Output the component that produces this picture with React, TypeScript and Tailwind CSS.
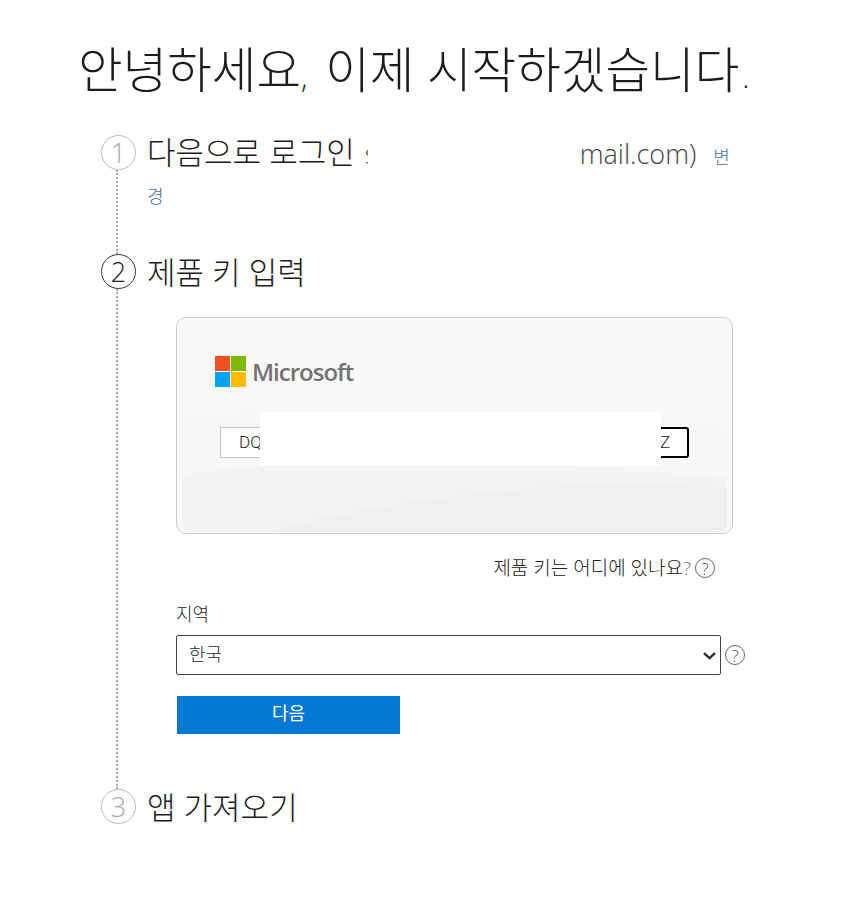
import React from "react";

const font = "font-['Open_Sans','Noto_Sans_CJK_KR',sans-serif]";

function Circle({ n, active }: { n: number; active?: boolean }) {
  return (
    <div
      className={
        "w-[35px] h-[35px] shrink-0 rounded-full border flex items-center justify-center text-[27px] font-light leading-none " +
        (active ? "border-[#333] text-[#222]" : "border-[#bbb] text-[#aaa]")
      }
    >
      {n}
    </div>
  );
}

function Line() {
  return <div className="flex-1 w-0 mr-[3px] border-l-2 border-dotted border-[#aaa]" />;
}

function Help() {
  return (
    <span className="w-5 h-5 shrink-0 rounded-full border border-[#666] flex items-center justify-center text-[17px] font-light leading-none text-[#555]">
      ?
    </span>
  );
}

function Logo() {
  return (
    <svg width="31" height="31" viewBox="0 0 31 31" className="shrink-0">
      <rect x="0" y="0" width="15" height="15" fill="#f25022" />
      <rect x="16" y="0" width="15" height="15" fill="#7fba00" />
      <rect x="0" y="16" width="15" height="15" fill="#00a4ef" />
      <rect x="16" y="16" width="15" height="15" fill="#ffb900" />
    </svg>
  );
}

export default function App() {
  return (
    <div className={"w-[847px] h-[913px] bg-white text-[#1c1c1c] overflow-hidden " + font}>
      <h1 className="pl-[78px] pt-[37px] h-[135px] text-[48.5px] leading-[64px] font-light whitespace-nowrap">
        안녕하세요<span className="text-[30px] pr-[5px]">,</span> 이제 시작하겠습니다<span className="text-[30px] pl-[3px]">.</span>
      </h1>

      <div className="pl-[101px] w-[760px]">
        {/* Step 1 */}
        <div className="flex gap-[11px] h-[119px]">
          <div className="w-[35px] flex flex-col items-center">
            <Circle n={1} />
            <Line />
          </div>
          <p className="w-[590px] text-[31px] leading-[34px] font-light break-all">
            <span>다음으로 로그인</span>
            <span className="inline-block w-[13px] pl-[3px] whitespace-nowrap [clip-path:inset(0_0_0_0)] text-[27px] font-light">
              &nbsp;s
            </span>
            <span className="inline-block w-[212px]" />
            <span className="font-light text-[27px] text-[#444]">mail.com)</span>
            <a className="ml-[17px] text-[18px] text-[#4472a8]">변경</a>
          </p>
        </div>

        {/* Step 2 */}
        <div className="flex gap-[11px] h-[535px]">
          <div className="w-[35px] flex flex-col items-center">
            <Circle n={2} active />
            <Line />
          </div>
          <div className="flex-1 min-w-0">
            <h2 className="text-[31px] leading-[36px] font-light whitespace-nowrap">제품 키 입력</h2>

            <div className="ml-[29px] w-[557px] mt-[27px]">
              <div className="relative h-[217px] rounded-[10px] border border-[#cccccc] bg-[#f8f8f8] overflow-visible">
                <svg
                  className="absolute inset-0 w-full h-full rounded-[10px]"
                  viewBox="0 0 555 215"
                  preserveAspectRatio="none"
                >
                  <path d="M5 100 C150 85 400 95 550 112 L550 205 Q550 214 540 214 L15 214 Q5 214 5 205 Z" fill="#f7f7f7" />
                  <path d="M5 157 C40 152 80 148 120 146 C300 140 450 150 550 160 L550 205 Q550 214 540 214 L15 214 Q5 214 5 205 Z" fill="#f3f3f3" />
                  <path d="M90 214 C180 190 300 172 400 168 C460 166 510 168 550 171 L550 205 Q550 214 540 214 Z" fill="#efefef" />
                </svg>

                <div className="relative pt-[38px] pl-[38px] pr-[43px]">
                  <div className="flex items-center gap-[6px] h-[31px]">
                    <Logo />
                    <span className="font-['Open_Sans',sans-serif] text-[24px] font-semibold tracking-[-1px] text-[#737373]">
                      Microsoft
                    </span>
                  </div>

                  <div className="relative mt-[40px] ml-[5px] h-[31px] flex font-['Roboto',sans-serif] font-light text-[17px] text-[#222]">
                    <div className="w-[60px] bg-white border border-[#c8c8c8] pl-[18px] leading-[29px]">DQ</div>
                    <div className="flex-1 bg-white border-y border-[#c8c8c8]" />
                    <div className="w-[48px] bg-white border-2 border-black rounded-[3px] pl-[17px] leading-[27px]">Z</div>
                    {/* redaction patch over the key */}
                    <div className="absolute left-[40px] top-[-15px] w-[401px] h-[54px] bg-white" />
                  </div>
                </div>
              </div>

              <div className="mt-[23px] h-[22px] pr-[18px] flex items-center justify-end gap-[4px] text-[19px] font-light text-[#222]">
                <span className="whitespace-nowrap">
                  제품 키는 어디에 있나요<span className="text-[#777]">?</span>
                </span>
                <Help />
              </div>

              <label className="block mt-[23px] text-[18px] leading-[24px] font-light text-[#222]">지역</label>

              <div className="mt-[9px] flex items-center gap-1">
                <div className="relative w-[545px] shrink-0">
                  <select className="block w-full h-[40px] appearance-none pl-3 pb-[2px] border border-[#444] rounded-[2px] bg-white text-[18px] font-light text-[#222]">
                    <option>한국</option>
                  </select>
                  <svg
                    className="absolute right-[5px] top-[17px] pointer-events-none"
                    width="13"
                    height="8"
                    viewBox="0 0 13 8"
                    fill="none"
                    stroke="#2b2b2b"
                    strokeWidth="2.4"
                  >
                    <path d="M1 1.2 L6.5 6.2 L12 1.2" />
                  </svg>
                </div>
                <Help />
              </div>

              <button className="block mt-[21px] ml-px w-[223px] h-[38px] pb-1 bg-[#0078d4] text-white text-[18px]">
                다음
              </button>
            </div>
          </div>
        </div>

        {/* Step 3 */}
        <div className="flex gap-[11px]">
          <Circle n={3} />
          <h2 className="text-[31px] leading-[36px] font-light whitespace-nowrap">앱 가져오기</h2>
        </div>
      </div>
    </div>
  );
}
